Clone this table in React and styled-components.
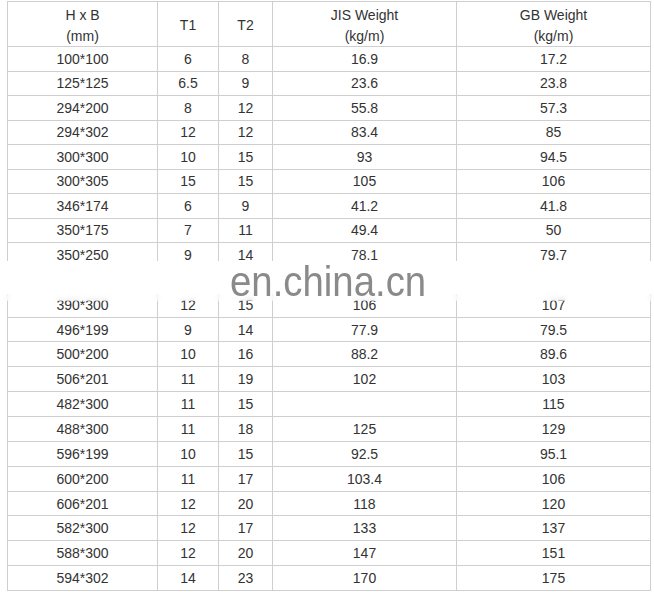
import React from "react";
import styled, { createGlobalStyle } from "styled-components";

const Global = createGlobalStyle`
  html, body { margin: 0; padding: 0; background: #fff; }
  body { font-family: "Liberation Sans", Arial, sans-serif; }
`;

const Wrap = styled.div`
  position: relative;
  padding: 1px 0 0 7px;
  width: 654px;
  height: 592px;
  box-sizing: border-box;
  overflow: hidden;
`;

const Table = styled.table`
  border-collapse: collapse;
  table-layout: fixed;
  width: 643px;
  color: #333;
  font-size: 14px;
`;

const HeadCell = styled.th`
  border: 1px solid #cfcfcf;
  font-weight: normal;
  text-align: center;
  vertical-align: middle;
  line-height: 20.5px;
  padding: 3px 0 0 0;
  height: 41px;
`;

const Row = styled.tr`
  height: ${(p) => p.$h}px;
`;

const Cell = styled.td`
  border: 1px solid #cfcfcf;
  text-align: center;
  vertical-align: middle;
  padding: 0;
  line-height: 16px;
`;

const Band = styled.div`
  position: absolute;
  left: 0;
  right: 0;
  top: 261px;
  height: 33px;
  background: #fff;
`;

const Smear = styled.div`
  position: absolute;
  left: 0;
  right: 0;
  top: 294px;
  height: 7px;
  background: rgba(255, 255, 255, 0.35);
  backdrop-filter: blur(2.5px);
`;

const Mark = styled.div`
  position: absolute;
  left: 230px;
  top: 261px;
  font-family: "Liberation Sans", Arial, sans-serif;
  font-size: 42px;
  line-height: 42px;
  color: #8a8a8a;
  white-space: nowrap;
  transform: scaleX(0.913);
  transform-origin: left top;
`;

const cols = [150, 61, 54, 184, 194];

const rows = [
  ["100*100", "6", "8", "16.9", "17.2"],
  ["125*125", "6.5", "9", "23.6", "23.8"],
  ["294*200", "8", "12", "55.8", "57.3"],
  ["294*302", "12", "12", "83.4", "85"],
  ["300*300", "10", "15", "93", "94.5"],
  ["300*305", "15", "15", "105", "106"],
  ["346*174", "6", "9", "41.2", "41.8"],
  ["350*175", "7", "11", "49.4", "50"],
  ["350*250", "9", "14", "78.1", "79.7"],
  ["", "", "", "", ""],
  ["390*300", "12", "15", "106", "107"],
  ["496*199", "9", "14", "77.9", "79.5"],
  ["500*200", "10", "16", "88.2", "89.6"],
  ["506*201", "11", "19", "102", "103"],
  ["482*300", "11", "15", "", "115"],
  ["488*300", "11", "18", "125", "129"],
  ["596*199", "10", "15", "92.5", "95.1"],
  ["600*200", "11", "17", "103.4", "106"],
  ["606*201", "12", "20", "118", "120"],
  ["582*300", "12", "17", "133", "137"],
  ["588*300", "12", "20", "147", "151"],
  ["594*302", "14", "23", "170", "175"],
];

export default function App() {
  return (
    <Wrap>
      <Global />
      <Table>
        <colgroup>
          {cols.map((w, i) => (
            <col key={i} style={{ width: w }} />
          ))}
        </colgroup>
        <thead>
          <tr>
            <HeadCell>
              H x B
              <br />
              (mm)
            </HeadCell>
            <HeadCell>T1</HeadCell>
            <HeadCell>T2</HeadCell>
            <HeadCell>
              JIS Weight
              <br />
              (kg/m)
            </HeadCell>
            <HeadCell>
              GB Weight
              <br />
              (kg/m)
            </HeadCell>
          </tr>
        </thead>
        <tbody>
          {rows.map((r, i) => (
            <Row key={i} $h={i < 8 ? 24.5 : 24.86}>
              {r.map((c, j) => (
                <Cell key={j}>{c}</Cell>
              ))}
            </Row>
          ))}
        </tbody>
      </Table>
      <Band />
      <Smear />
      <Mark>en.china.cn</Mark>
    </Wrap>
  );
}
